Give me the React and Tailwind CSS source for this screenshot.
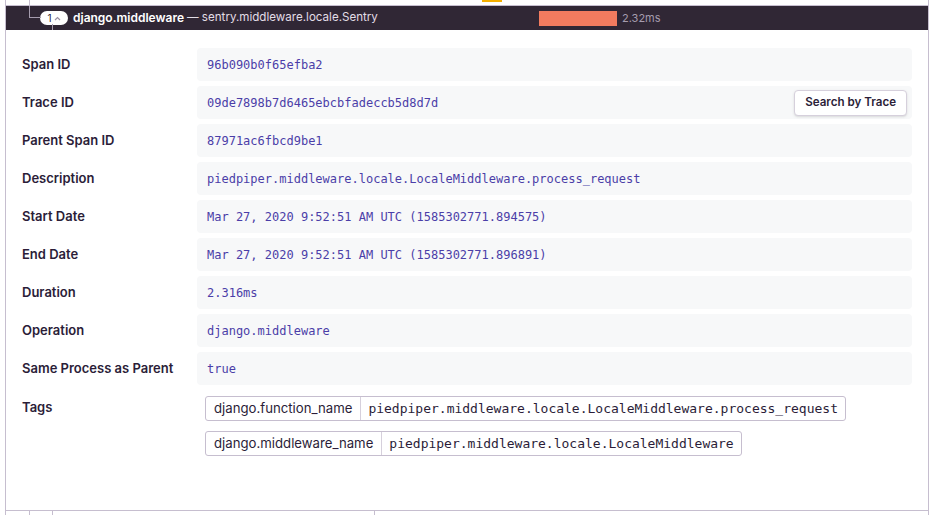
import React from "react";

const sans = { fontFamily: "Inter, 'Noto Sans', sans-serif" };

const rows = [
  { label: "Span ID", value: "96b090b0f65efba2" },
  { label: "Trace ID", value: "09de7898b7d6465ebcbfadeccb5d8d7d", button: "Search by Trace" },
  { label: "Parent Span ID", value: "87971ac6fbcd9be1" },
  { label: "Description", value: "piedpiper.middleware.locale.LocaleMiddleware.process_request" },
  { label: "Start Date", value: "Mar 27, 2020 9:52:51 AM UTC (1585302771.894575)" },
  { label: "End Date", value: "Mar 27, 2020 9:52:51 AM UTC (1585302771.896891)" },
  { label: "Duration", value: "2.316ms" },
  { label: "Operation", value: "django.middleware" },
  { label: "Same Process as Parent", value: "true" },
];

const tags = [
  { key: "django.function_name", value: "piedpiper.middleware.locale.LocaleMiddleware.process_request" },
  { key: "django.middleware_name", value: "piedpiper.middleware.locale.LocaleMiddleware" },
];

function Row({ label, value, button }) {
  return (
    <div className="flex items-center h-[33px]">
      <div className="w-[175px] shrink-0 text-[13px] font-semibold text-[#2b1d38]">{label}</div>
      <div className="flex-1 h-full flex items-center justify-between bg-[#f7f8f9] rounded-[4px] pl-[10px] pr-[5px]">
        <span className="font-['DejaVu_Sans_Mono',monospace] text-[12px] text-[#4b3ea8]">{value}</span>
        {button && (
          <button className="h-[26px] px-[10px] bg-white border border-[#d6d0dc] rounded-[4px] shadow-sm text-[11.6px] font-semibold text-[#2b1d38]">
            {button}
          </button>
        )}
      </div>
    </div>
  );
}

function Tag({ k, v }) {
  return (
    <div className="flex items-stretch h-[25px] border border-[#c6becf] rounded-[3px] text-[#2b1d38] w-fit">
      <span className="flex items-center px-[8px] text-[13.2px] border-r border-[#d6d0dc]">{k}</span>
      <span className="flex items-center px-[7px] font-['DejaVu_Sans_Mono',monospace] text-[13px]">{v}</span>
    </div>
  );
}

export default function App() {
  return (
    <div className="w-[934px] h-[515px] bg-white overflow-hidden relative" style={sans}>
      <div className="ml-[5px] w-[924px] border-x border-[#c6becf]">
        {/* previous row tail */}
        <div className="h-[6px] relative border-b border-[#c6becf]">
          <div className="absolute left-[23px] top-0 h-full w-px bg-[#c6becf]" />
          <div className="absolute left-[476px] top-0 h-[2px] w-[20px] bg-[#f5b000]" />
        </div>

        {/* span header */}
        <div className="h-[24px] bg-[#302735] flex items-center relative">
          <div className="absolute left-[23px] top-0 h-[11px] w-px bg-[#a59cae]" />
          <div className="absolute left-[23px] top-[11px] h-px w-[12px] bg-[#a59cae]" />
          <div className="absolute left-[46px] top-[18px] h-[6px] w-px bg-[#a59cae]" />
          <div className="w-[533px] shrink-0 flex items-center pl-[34px]">
            <div className="h-[14px] w-[28px] bg-white rounded-full flex items-center justify-center gap-[2px] text-[10px] text-[#2b1d38]">
              <span>1</span>
              <svg width="7" height="5" viewBox="0 0 7 5" fill="none">
                <path d="M1 4 L3.5 1.5 L6 4" stroke="#9a90a4" strokeWidth="1.2" />
              </svg>
            </div>
            <span className="ml-[5px] text-[12px] font-semibold text-white whitespace-nowrap">django.middleware</span>
            <span className="ml-[3px] text-[11.6px] text-[#e2dde6] whitespace-nowrap">— sentry.middleware.locale.Sentry</span>
          </div>
          <div className="w-[78px] h-[15px] bg-[#f27b5f]" />
          <span className="ml-[5px] text-[11px] text-[#a59cae]">2.32ms</span>
        </div>

        {/* details */}
        <div className="h-[481px] border-b border-[#c6becf] pt-[18px] pl-[16px] pr-[16px]">
          <div className="flex flex-col gap-[5px]">
            {rows.map((r) => (
              <Row key={r.label} {...r} />
            ))}
            <div className="flex pt-[6px]">
              <div className="w-[175px] shrink-0 text-[13px] font-semibold text-[#2b1d38] pt-[2px]">Tags</div>
              <div className="flex flex-col gap-[10px] pl-[8px]">
                {tags.map((t) => (
                  <Tag key={t.key} k={t.key} v={t.value} />
                ))}
              </div>
            </div>
          </div>
        </div>

        {/* next row head */}
        <div className="h-[10px] relative">
          <div className="absolute left-[23px] top-0 h-full w-px bg-[#c6becf]" />
          <div className="absolute left-[46px] top-0 h-full w-px bg-[#c6becf]" />
          <div className="absolute left-[368px] top-0 h-full w-px bg-[#c6becf]" />
        </div>
      </div>
    </div>
  );
}
